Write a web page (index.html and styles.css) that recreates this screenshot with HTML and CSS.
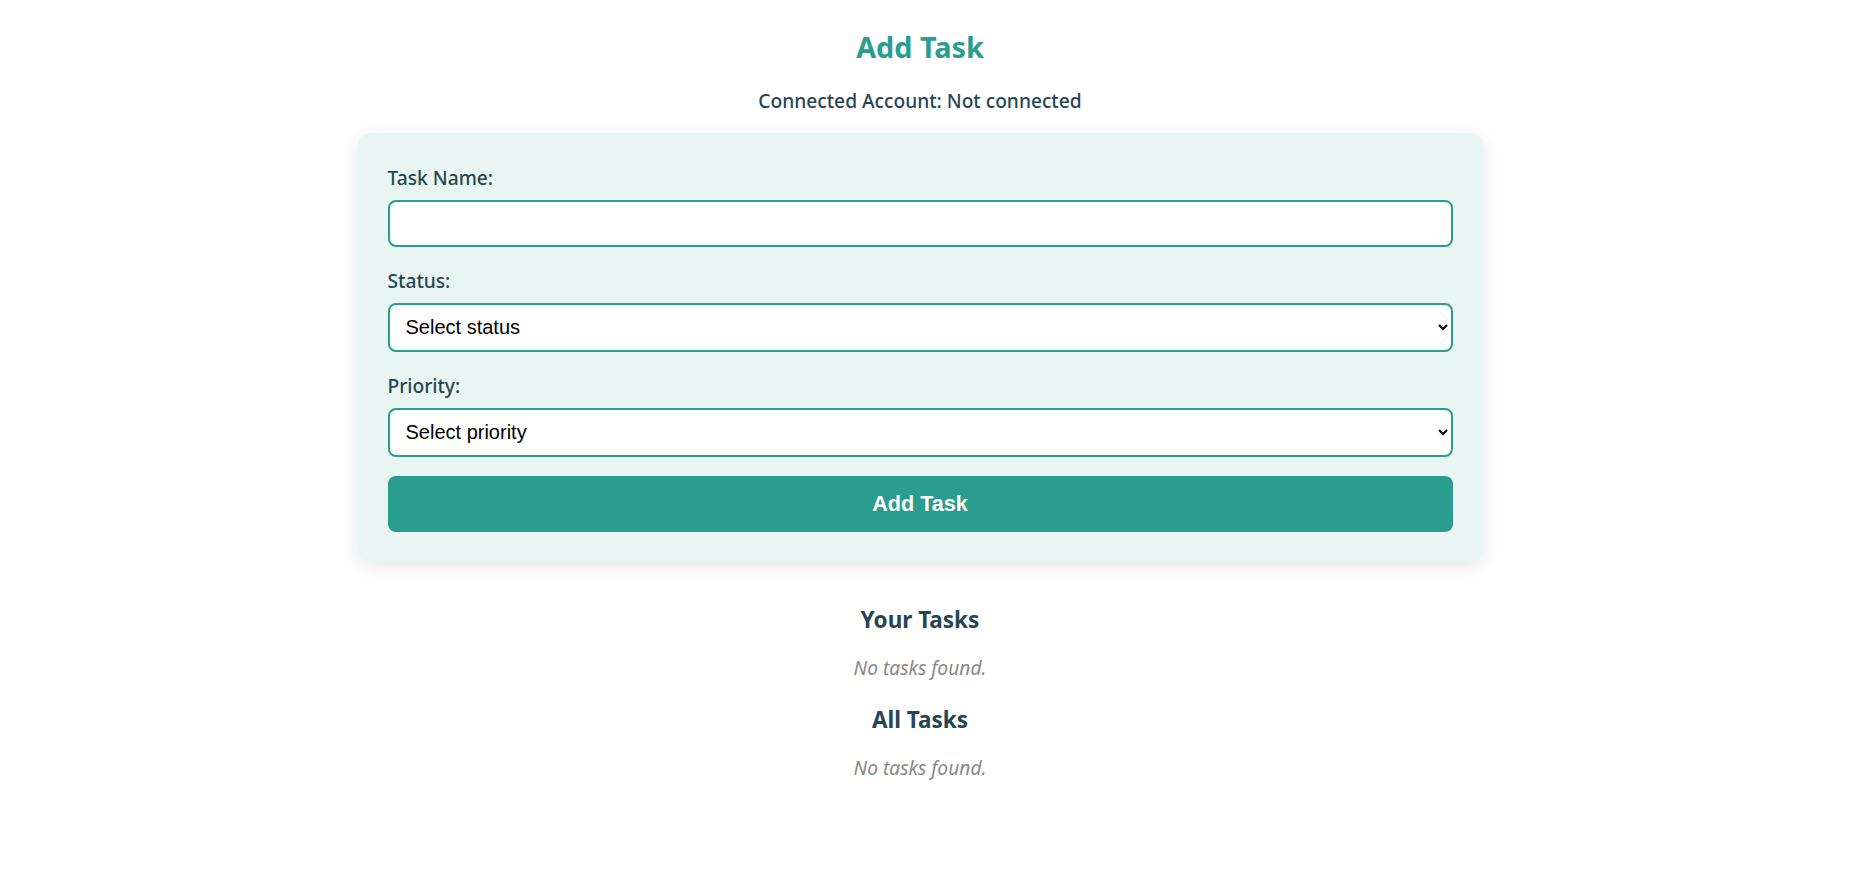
FILE: index.html
```html
<!doctype html>
<html lang="en">
  <head>
    <meta charset="UTF-8" />
    <meta name="viewport" content="width=device-width, initial-scale=1.0" />
    <title>Task Manager</title>
    <link rel="stylesheet" href="styles.css">
  </head>
  <body>
    <div class="app">
      <h2 class="page-title">Add Task</h2>
      <p class="account">Connected Account: Not connected</p>

      <form class="task-form" onsubmit="return false;">
        <div class="form-group">
          <label for="taskName">Task Name:</label>
          <input type="text" id="taskName" class="field" />
        </div>

        <div class="form-group">
          <label for="status">Status:</label>
          <select id="status" class="field select">
            <option value="">Select status</option>
            <option value="todo">To Do</option>
            <option value="progress">In Progress</option>
            <option value="done">Done</option>
          </select>
        </div>

        <div class="form-group">
          <label for="priority">Priority:</label>
          <select id="priority" class="field select">
            <option value="">Select priority</option>
            <option value="low">Low</option>
            <option value="medium">Medium</option>
            <option value="high">High</option>
          </select>
        </div>

        <button type="submit" class="submit-btn">Add Task</button>
      </form>

      <div class="task-list">
        <h3>Your Tasks</h3>
        <p class="empty">No tasks found.</p>
      </div>

      <div class="task-list">
        <h3>All Tasks</h3>
        <p class="empty">No tasks found.</p>
      </div>
    </div>
  </body>
</html>
```

FILE: styles.css
```css
body {
  margin: 0;
  padding: 0 15px 0 0;
  font-family: 'Noto Sans', 'Open Sans', Arial, sans-serif;
  background: #ffffff;
  color: #264653;
}

.app {
  max-width: 1125px;
  margin: 0 auto;
  text-align: center;
}

.page-title {
  margin: 28px 0 0 0;
  font-size: 28.8px;
  line-height: 38px;
  font-weight: 700;
  color: #2a9d8f;
}

.account {
  margin: 21px 0 0 0;
  font-size: 19.2px;
  line-height: 27px;
  font-weight: 500;
  color: #264653;
}

.task-form {
  margin: 18.5px 0 43px 0;
  padding: 30px;
  background: #e8f5f2;
  border-radius: 12px;
  box-shadow: 0 4px 20px rgba(0, 0, 0, 0.1);
  text-align: left;
}

.form-group {
  margin-bottom: 19px;
}

.form-group label {
  display: block;
  margin-bottom: 7px;
  font-size: 19.2px;
  line-height: 30px;
  font-weight: 500;
  color: #264653;
}

.field {
  display: block;
  width: 100%;
  box-sizing: border-box;
  height: 47px;
  padding: 0 12px;
  border: 2px solid #2a9d8f;
  border-radius: 8px;
  background: #ffffff;
  font-family: Arial, 'Liberation Sans', sans-serif;
  font-size: 20px;
  color: #000000;
  outline: none;
}

.select {
  height: 49px;
}

.submit-btn {
  display: block;
  width: 100%;
  height: 56px;
  border: none;
  border-radius: 8px;
  background: #2a9d8f;
  color: #ffffff;
  font-family: Arial, 'Liberation Sans', sans-serif;
  font-size: 21.6px;
  font-weight: 700;
  cursor: pointer;
}

.submit-btn:hover {
  background: #238276;
}

.task-list h3 {
  margin: 24.5px 0 0 0;
  font-size: 22.5px;
  line-height: 29px;
  font-weight: 700;
  color: #264653;
}

.empty {
  margin: 20px 0 0 0;
  font-size: 19.2px;
  line-height: 27px;
  font-style: italic;
  color: #888888;
}
```
